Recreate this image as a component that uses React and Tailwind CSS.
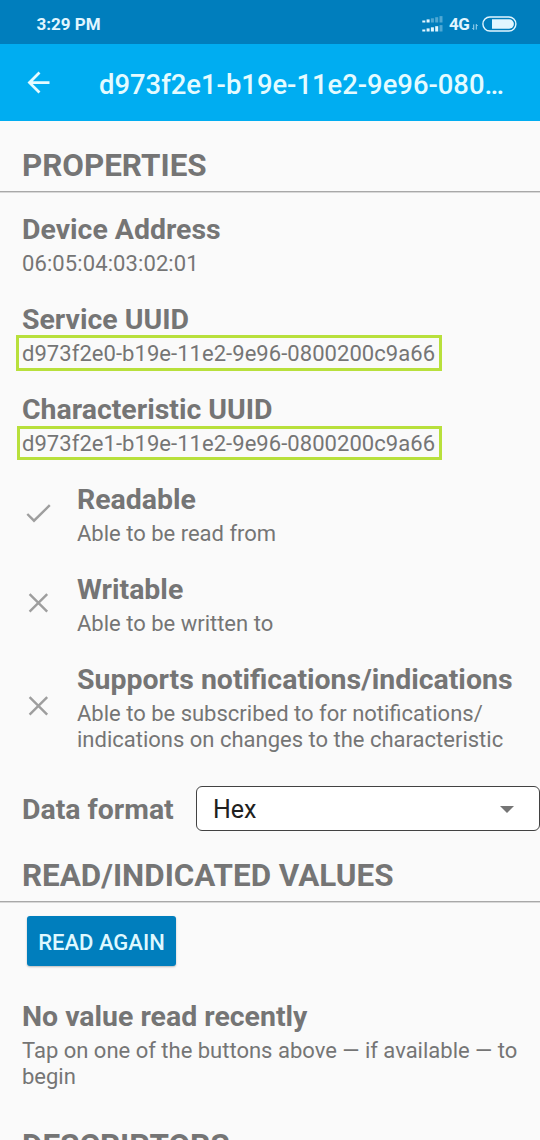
function SectionHeading({ children }) {
  return (
    <h2 className="flex h-[50px] shrink-0 items-center whitespace-nowrap border-b border-[#a8a8a8] pb-px pl-[22px] text-[31.4px] font-bold leading-[36px] shadow-[0_1px_0_#d8d8d8]">
      {children}
    </h2>
  );
}

function Entry({ title, children }) {
  return (
    <div className="flex flex-col gap-[3px] pb-3 pt-[13px]">
      <h3 className="whitespace-nowrap text-[28.45px] font-bold leading-[36px]">{title}</h3>
      <div className="text-[22px] leading-[26px]">{children}</div>
    </div>
  );
}

function Marked({ frame, children }) {
  return (
    <div className="relative whitespace-nowrap tracking-[0.05px]">
      {children}
      <span className={frame} />
    </div>
  );
}

function Check() {
  return (
    <svg width="33" height="33" viewBox="0 0 33 33" fill="none" stroke="#9e9e9e" strokeWidth="2.4">
      <path d="M5.3 17 L12 23.7 L27.8 8.2" />
    </svg>
  );
}

function Cross() {
  return (
    <svg width="33" height="33" viewBox="0 0 33 33" fill="none" stroke="#9e9e9e" strokeWidth="2.4">
      <path d="M7.6 7.1 L25.2 24.7 M25.2 7.1 L7.6 24.7" />
    </svg>
  );
}

function Capability({ icon, title, children }) {
  return (
    <div className="flex items-center">
      <div className="flex w-[55px] shrink-0 justify-start pb-[2px]">{icon}</div>
      <Entry title={title}>{children}</Entry>
    </div>
  );
}

function StatusIcons() {
  const bars = [0, 1, 2, 3, 4];
  return (
    <div className="flex items-center">
      <svg width="22" height="18" viewBox="0 0 22 18" fill="#e2f6ff">
        {bars.map((i) => (
          <rect key={`a${i}`} x={0.3 + i * 4.3} y={5.5 - i * 1.1} width="3" height={2 + i * 1.1} opacity={i < 2 ? 1 : 0.35} />
        ))}
        {bars.map((i) => (
          <rect key={`b${i}`} x={0.3 + i * 4.3} y={14.5 - i * 1.1} width="3" height={2 + i * 1.1} opacity={i < 4 ? 1 : 0.35} />
        ))}
      </svg>
      <span className="ml-[5px] text-[17px] font-bold leading-5 tracking-[-0.4px]">4G</span>
      <svg className="ml-[2px] mt-[6px]" width="6" height="8" viewBox="0 0 7 8" fill="none" stroke="#bfe6f8" strokeWidth="1">
        <path d="M2 1 V7 M0.5 5.3 L2 7 M5 7 V1 M6.5 2.7 L5 1" />
      </svg>
      <svg className="ml-[4px]" width="35" height="16" viewBox="0 0 35 16">
        <rect x="0.9" y="1" width="33" height="14" rx="7" fill="none" stroke="#e2f6ff" strokeWidth="1.4" />
        <path d="M10 3.3 H27.2 A4.7 4.7 0 0 1 27.2 12.7 H10 Z" fill="#e2f6ff" />
      </svg>
    </div>
  );
}

export default function App() {
  return (
    <div className="flex h-[1140px] w-[540px] flex-col overflow-hidden bg-[#fafafa] font-['Roboto',sans-serif] text-[#757575]">
      <div className="flex h-11 shrink-0 items-center justify-between bg-[#007ebd] pl-[36.5px] pr-[23.5px] pt-1 text-[#e2f6ff]">
        <span className="text-[17px] font-bold leading-5">3:29 PM</span>
        <StatusIcons />
      </div>
      <header className="flex h-[77px] shrink-0 items-center bg-[#00adf1] pl-[22px] text-[#e4fbff]">
        <svg width="33" height="33" viewBox="0 0 24 24" fill="currentColor">
          <path d="M20 11H7.83l5.59-5.59L12 4l-8 8 8 8 1.41-1.41L7.83 13H20v-2z" />
        </svg>
        <h1 className="ml-[44px] whitespace-nowrap pt-[5px] text-[27.4px] font-medium leading-9">d973f2e1-b19e-11e2-9e96-080…</h1>
      </header>

      <main className="flex flex-col pt-[21px]">
        <SectionHeading>PROPERTIES</SectionHeading>
        <div className="flex flex-col pl-[22px] pt-[7px]">
          <Entry title="Device Address">
            <span className="tracking-[0.1px]">06:05:04:03:02:01</span>
          </Entry>
          <Entry title="Service UUID">
            <Marked frame="absolute -left-[6px] -top-[6px] h-9 w-[426px] border-3 border-[#b8e03c]">
              d973f2e0-b19e-11e2-9e96-0800200c9a66
            </Marked>
          </Entry>
          <Entry title="Characteristic UUID">
            <Marked frame="absolute -left-[5px] -top-[5px] h-[34px] w-[425px] border-3 border-[#b8e03c]">
              d973f2e1-b19e-11e2-9e96-0800200c9a66
            </Marked>
          </Entry>
          <Capability icon={<Check />} title="Readable">Able to be read from</Capability>
          <Capability icon={<Cross />} title="Writable">Able to be written to</Capability>
          <Capability icon={<Cross />} title="Supports notifications/indications">
            Able to be subscribed to for notifications/
            <br />
            indications on changes to the characteristic
          </Capability>
        </div>

        <div className="flex items-center pl-[22px] pt-[21px]">
          <label className="w-[174px] whitespace-nowrap pt-[2px] text-[28.45px] font-bold leading-[36px]">Data format</label>
          <button className="flex h-[45px] flex-1 items-center justify-between rounded-[6px] border-[1.5px] border-[#424242] bg-white pl-4 pr-[25px] text-[25px] text-[#202020]">
            <span className="pt-[3px]">Hex</span>
            <svg className="mt-px" width="14" height="7" viewBox="0 0 14 7" fill="#757575">
              <path d="M0 0 H14 L7 7 Z" />
            </svg>
          </button>
        </div>

        <div className="pt-[21px]">
          <SectionHeading>READ/INDICATED VALUES</SectionHeading>
        </div>
        <div className="pl-[27px] pt-[14px]">
          <button className="flex h-[50px] w-[149px] items-center justify-center whitespace-nowrap rounded-[3px] bg-[#007ebd] pt-[2px] text-[22px] font-medium text-[#dff8ff] shadow-[0_1px_2px_rgba(0,0,0,0.25)]">
            READ AGAIN
          </button>
        </div>
        <div className="pl-[22px] pt-5">
          <Entry title="No value read recently">
            Tap on one of the buttons above — if available — to
            <br />
            begin
          </Entry>
        </div>
        <div className="pt-5">
          <SectionHeading>DESCRIPTORS</SectionHeading>
        </div>
      </main>
    </div>
  );
}
